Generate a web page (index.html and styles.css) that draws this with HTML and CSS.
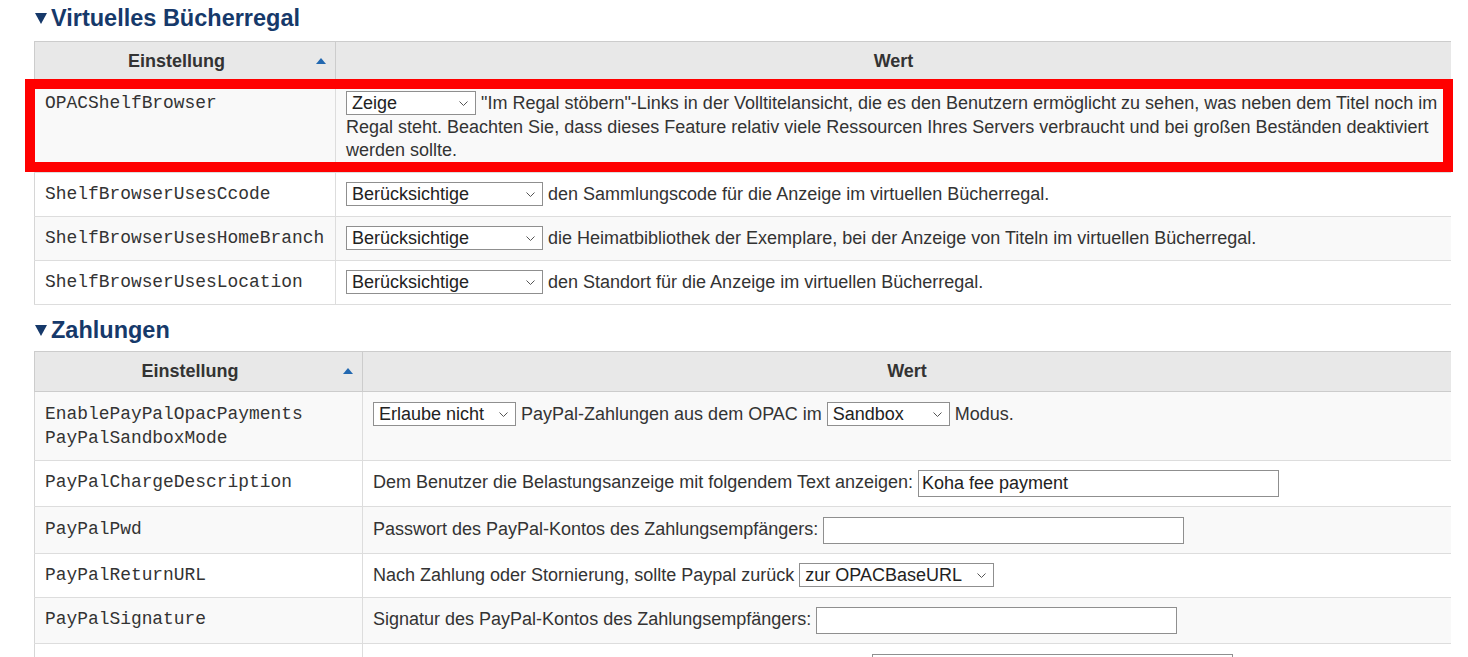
FILE: index.html
```html
<!DOCTYPE html>
<html lang="de">
<head>
<meta charset="utf-8">
<title>Systemparameter</title>
<link rel="stylesheet" href="styles.css">
</head>
<body>
<div class="page">
  <h3 class="section-title">
    <svg class="toggle" width="12" height="12" viewBox="0 0 12 12"><path d="M0 1 L12 1 L6 12 Z" fill="currentColor"/></svg>
    <span>Virtuelles Bücherregal</span>
  </h3>
  <div class="table-wrap">
    <table class="prefs prefs-1">
      <colgroup><col class="c-key"><col></colgroup>
      <thead>
        <tr>
          <th><div class="th-inner"><span class="th-label">Einstellung</span><svg class="sort" width="10" height="6" viewBox="0 0 10 6"><path d="M0 6 L5 0 L10 6 Z" fill="currentColor"/></svg></div></th>
          <th>Wert</th>
        </tr>
      </thead>
      <tbody>
        <tr>
          <td class="key">OPACShelfBrowser</td>
          <td><span class="sel w-zeige"><select><option>Zeige</option><option>Zeige nicht</option></select><svg class="chev" width="9" height="5" viewBox="0 0 9 5"><path d="M0.5 0.5 L4.5 4.5 L8.5 0.5" fill="none" stroke="currentColor" stroke-width="1"/></svg></span> "Im Regal stöbern"-Links in der Volltitelansicht, die es den Benutzern ermöglicht zu sehen, was neben dem Titel noch im Regal steht. Beachten Sie, dass dieses Feature relativ viele Ressourcen Ihres Servers verbraucht und bei großen Beständen deaktiviert werden sollte.</td>
        </tr>
        <tr>
          <td class="key">ShelfBrowserUsesCcode</td>
          <td><span class="sel w-ber"><select><option>Berücksichtige</option><option>Berücksichtige nicht</option></select><svg class="chev" width="9" height="5" viewBox="0 0 9 5"><path d="M0.5 0.5 L4.5 4.5 L8.5 0.5" fill="none" stroke="currentColor" stroke-width="1"/></svg></span> den Sammlungscode für die Anzeige im virtuellen Bücherregal.</td>
        </tr>
        <tr>
          <td class="key">ShelfBrowserUsesHomeBranch</td>
          <td><span class="sel w-ber"><select><option>Berücksichtige</option><option>Berücksichtige nicht</option></select><svg class="chev" width="9" height="5" viewBox="0 0 9 5"><path d="M0.5 0.5 L4.5 4.5 L8.5 0.5" fill="none" stroke="currentColor" stroke-width="1"/></svg></span> die Heimatbibliothek der Exemplare, bei der Anzeige von Titeln im virtuellen Bücherregal.</td>
        </tr>
        <tr>
          <td class="key">ShelfBrowserUsesLocation</td>
          <td><span class="sel w-ber"><select><option>Berücksichtige</option><option>Berücksichtige nicht</option></select><svg class="chev" width="9" height="5" viewBox="0 0 9 5"><path d="M0.5 0.5 L4.5 4.5 L8.5 0.5" fill="none" stroke="currentColor" stroke-width="1"/></svg></span> den Standort für die Anzeige im virtuellen Bücherregal.</td>
        </tr>
      </tbody>
    </table>
    <div class="highlight"></div>
  </div>

  <h3 class="section-title second">
    <svg class="toggle" width="12" height="12" viewBox="0 0 12 12"><path d="M0 1 L12 1 L6 12 Z" fill="currentColor"/></svg>
    <span>Zahlungen</span>
  </h3>
  <div class="table-wrap">
    <table class="prefs prefs-2">
      <colgroup><col class="c-key2"><col></colgroup>
      <thead>
        <tr>
          <th><div class="th-inner"><span class="th-label">Einstellung</span><svg class="sort" width="10" height="6" viewBox="0 0 10 6"><path d="M0 6 L5 0 L10 6 Z" fill="currentColor"/></svg></div></th>
          <th>Wert</th>
        </tr>
      </thead>
      <tbody>
        <tr>
          <td class="key">EnablePayPalOpacPayments<br>PayPalSandboxMode</td>
          <td><span class="sel w-erlaube"><select><option>Erlaube nicht</option><option>Erlaube</option></select><svg class="chev" width="9" height="5" viewBox="0 0 9 5"><path d="M0.5 0.5 L4.5 4.5 L8.5 0.5" fill="none" stroke="currentColor" stroke-width="1"/></svg></span> PayPal-Zahlungen aus dem OPAC im <span class="sel w-sandbox"><select><option>Sandbox</option><option>Produktiv</option></select><svg class="chev" width="9" height="5" viewBox="0 0 9 5"><path d="M0.5 0.5 L4.5 4.5 L8.5 0.5" fill="none" stroke="currentColor" stroke-width="1"/></svg></span> Modus.</td>
        </tr>
        <tr>
          <td class="key">PayPalChargeDescription</td>
          <td>Dem Benutzer die Belastungsanzeige mit folgendem Text anzeigen: <input class="pref-input" type="text" value="Koha fee payment"></td>
        </tr>
        <tr>
          <td class="key">PayPalPwd</td>
          <td>Passwort des PayPal-Kontos des Zahlungsempfängers: <input class="pref-input" type="text" value=""></td>
        </tr>
        <tr>
          <td class="key">PayPalReturnURL</td>
          <td>Nach Zahlung oder Stornierung, sollte Paypal zurück <span class="sel w-url"><select><option>zur OPACBaseURL</option><option>zur Kontoseite</option></select><svg class="chev" width="9" height="5" viewBox="0 0 9 5"><path d="M0.5 0.5 L4.5 4.5 L8.5 0.5" fill="none" stroke="currentColor" stroke-width="1"/></svg></span></td>
        </tr>
        <tr>
          <td class="key">PayPalSignature</td>
          <td>Signatur des PayPal-Kontos des Zahlungsempfängers: <input class="pref-input" type="text" value=""></td>
        </tr>
        <tr>
          <td class="key">PayPalUser</td>
          <td>Benutzername des PayPal-Kontos des Zahlungsempfängers: <input class="pref-input last" type="text" value=""></td>
        </tr>
      </tbody>
    </table>
  </div>
</div>
</body>
</html>
```
FILE: styles.css
```css
html, body {
  margin: 0;
  padding: 0;
  background: #ffffff;
}

body {
  font-family: "Liberation Sans", Arial, sans-serif;
  font-size: 18px;
  line-height: 23.5px;
  color: #333333;
}

.page {
  padding: 4px 0 0 34px;
}

.section-title {
  display: flex;
  align-items: center;
  margin: 0 0 9px 0;
  font-size: 23.5px;
  line-height: 28px;
  font-weight: bold;
  color: #16396a;
}

.section-title.second {
  margin-top: 11px;
  margin-bottom: 7px;
}

.toggle {
  margin-left: 1px;
  margin-right: 4px;
  width: 12px;
  height: 12px;
}

.table-wrap {
  position: relative;
}

.prefs {
  width: 1417px;
  table-layout: fixed;
  border-collapse: collapse;
  border: 1px solid #d6d6d6;
  border-right: 0;
}

.c-key { width: 301px; }
.c-key2 { width: 328px; }

.prefs th {
  background: #e8e8e8;
  font-weight: bold;
  text-align: center;
  padding: 7.5px 10px;
  border: 1px solid #cccccc;
  border-right: 0;
  color: #333333;
}

.prefs th:first-child {
  padding: 7.5px 9px 7.5px 10px;
  border-right: 1px solid #cccccc;
}

.prefs-2 th,
.prefs-2 th:first-child {
  padding-top: 8px;
  padding-bottom: 8px;
}

.th-inner {
  display: flex;
  align-items: center;
}

.th-label {
  flex: 1;
  text-align: center;
}

.sort {
  margin-left: 8px;
  color: #2268b0;
}

.prefs td {
  padding: 9.5px 10px 9px 10px;
  vertical-align: top;
  border-top: 1px solid #dddddd;
  border-bottom: 1px solid #dddddd;
}

.prefs td.key {
  border-right: 1px solid #dddddd;
  font-family: "Liberation Mono", "Courier New", monospace;
  font-size: 17.9px;
  line-height: 24.5px;
  color: #333333;
}

.prefs tbody tr:nth-child(odd) td {
  background: #f9f9f9;
}

.prefs tbody tr:nth-child(even) td {
  background: #ffffff;
}

.sel {
  position: relative;
  display: inline-block;
  vertical-align: baseline;
}

.sel select {
  -webkit-appearance: none;
  appearance: none;
  box-sizing: border-box;
  width: 100%;
  height: 24px;
  margin: 0;
  padding: 0 22px 0 5px;
  border: 1px solid #8f8f8f;
  border-radius: 0;
  background: #ffffff;
  color: #222222;
  font-family: "Liberation Sans", Arial, sans-serif;
  font-size: 18px;
  line-height: 22px;
  vertical-align: baseline;
}

.chev {
  position: absolute;
  right: 8px;
  top: 10px;
  color: #555555;
  pointer-events: none;
}

.w-zeige { width: 130px; }
.w-ber { width: 197px; }
.w-erlaube { width: 143px; }
.w-sandbox { width: 123px; }
.w-url { width: 195px; }

.pref-input {
  box-sizing: border-box;
  width: 361px;
  height: 27px;
  margin: 0;
  padding: 1px 3px;
  border: 1px solid #8f8f8f;
  font-family: "Liberation Sans", Arial, sans-serif;
  font-size: 18px;
  color: #222222;
  background: #ffffff;
  vertical-align: middle;
}

.pref-input.last {
  margin-left: 6px;
}

.highlight {
  position: absolute;
  left: -9px;
  top: 38px;
  width: 1428px;
  height: 93px;
  box-sizing: border-box;
  border: 10px solid #ff0000;
  pointer-events: none;
}
```
